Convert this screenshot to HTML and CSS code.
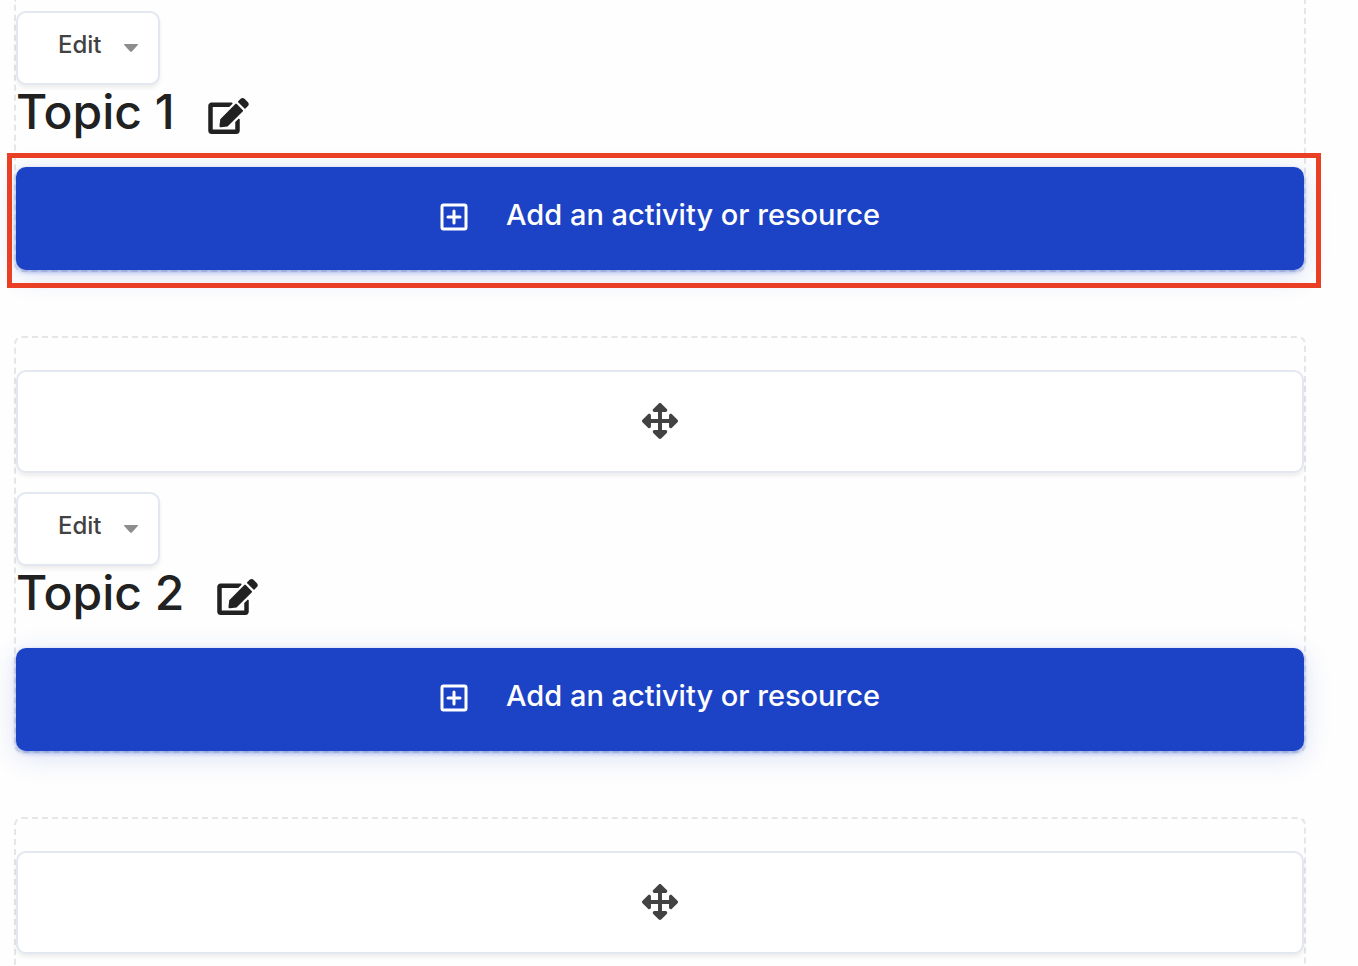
FILE: index.html
```
<!DOCTYPE html>
<html lang="en">

<head>
    <meta charset="UTF-8">
    <meta name="viewport" content="width=device-width,initial-scale=1">
    <link rel="stylesheet" href="styles.css">
    <title>Course topics</title>
</head>

<body>
    <!-- shared icons -->
    <svg class="sprite" aria-hidden="true">
        <symbol id="icon-edit" viewBox="0 0 576 512">
            <path d="M402.6 83.2l90.2 90.2c3.8 3.8 3.8 10 0 13.8L274.4 405.6l-92.8 10.3c-12.4 1.4-22.9-9.1-21.5-21.5l10.3-92.8L388.8 83.2c3.8-3.8 10-3.8 13.8 0zm162-22.9l-48.8-48.8c-15.2-15.2-39.9-15.2-55.2 0l-35.4 35.4c-3.8 3.8-3.8 10 0 13.8l90.2 90.2c3.8 3.8 10 3.8 13.8 0l35.4-35.4c15.2-15.3 15.2-40 0-55.2zM384 346.2V448H64V128h229.8c3.2 0 6.2-1.3 8.5-3.5l40-40c7.6-7.6 2.2-20.5-8.5-20.5H48C21.5 64 0 85.5 0 112v352c0 26.5 21.5 48 48 48h352c26.5 0 48-21.5 48-48V306.2c0-10.7-12.9-16-20.5-8.5l-40 40c-2.2 2.3-3.5 5.3-3.5 8.5z"/>
        </symbol>
        <symbol id="icon-move" viewBox="0 0 512 512">
            <path d="M352.201 425.775l-79.196 79.196c-9.373 9.373-24.568 9.373-33.941 0l-79.196-79.196c-15.119-15.119-4.411-40.971 16.971-40.97h51.162L228 284H127.196v51.162c0 21.382-25.851 32.09-40.971 16.971L7.029 272.937c-9.373-9.373-9.373-24.569 0-33.941L86.225 159.8c15.119-15.119 40.971-4.411 40.971 16.971V228H228V127.196h-51.23c-21.382 0-32.09-25.851-16.971-40.971l79.196-79.196c9.373-9.373 24.568-9.373 33.941 0l79.196 79.196c15.119 15.119 4.411 40.971-16.971 40.971h-51.162V228h100.804v-51.162c0-21.382 25.851-32.09 40.97-16.971l79.196 79.196c9.373 9.373 9.373 24.569 0 33.941L425.773 352.2c-15.119 15.119-40.971 4.411-40.97-16.971V284H284v100.804h51.23c21.382 0 32.09 25.851 16.971 40.971z"/>
        </symbol>
        <symbol id="icon-add" viewBox="0 0 28 28">
            <rect x="2" y="2" width="24" height="24" rx="1.5" fill="none" stroke="currentColor" stroke-width="3"/>
            <path d="M14 8v12M8 14h12" fill="none" stroke="currentColor" stroke-width="3" stroke-linecap="round"/>
        </symbol>
        <symbol id="icon-caret" viewBox="0 0 14 8">
            <path d="M0.6 0h12.8c0.6 0 0.8 0.7 0.4 1.1L7.9 7.4c-0.5 0.5-1.3 0.5-1.8 0L0.2 1.1C-0.2 0.7 0 0 0.6 0z"/>
        </symbol>
    </svg>

    <main class="topics">
        <section class="topic topic-first">
            <button type="button" class="button-edit">
                Edit
                <svg class="caret"><use href="#icon-caret"/></svg>
            </button>
            <h3 class="topic-title">
                Topic 1
                <a href="#" aria-label="Edit topic name"><svg class="icon-edit"><use href="#icon-edit"/></svg></a>
            </h3>
            <div class="highlight">
                <button type="button" class="button-add">
                    <svg class="icon-add"><use href="#icon-add"/></svg>
                    Add an activity or resource
                </button>
            </div>
        </section>

        <section class="topic">
            <button type="button" class="button-move" aria-label="Move topic">
                <svg class="icon-move"><use href="#icon-move"/></svg>
            </button>
            <button type="button" class="button-edit">
                Edit
                <svg class="caret"><use href="#icon-caret"/></svg>
            </button>
            <h3 class="topic-title">
                Topic 2
                <a href="#" aria-label="Edit topic name"><svg class="icon-edit"><use href="#icon-edit"/></svg></a>
            </h3>
            <button type="button" class="button-add">
                <svg class="icon-add"><use href="#icon-add"/></svg>
                Add an activity or resource
            </button>
        </section>

        <section class="topic topic-last">
            <button type="button" class="button-move" aria-label="Move topic">
                <svg class="icon-move"><use href="#icon-move"/></svg>
            </button>
        </section>
    </main>
</body>

</html>
```
FILE: styles.css
```
*,
*::before,
*::after {
    box-sizing: border-box;
    padding: 0;
    margin: 0;
}

body {
    background: #fefefe;
    color: #212121;
    font-family: Inter, "Liberation Sans", sans-serif;
}

svg {
    display: block;
    flex: none;
    fill: currentColor;
}

button {
    font: inherit;
    cursor: pointer;
}

.sprite {
    display: none;
}

.topics {
    display: flex;
    flex-direction: column;
    gap: 64px;
    min-height: 100vh;
    padding: 0 52px 0 14px;
}

.topic {
    display: flex;
    flex-direction: column;
    align-items: stretch;
    padding-top: 32px;
    border: 2px dashed #e6e6e6;
    border-radius: 8px;
}

.topic-first {
    padding-top: 11px;
    border-top: none;
    border-top-left-radius: 0;
    border-top-right-radius: 0;
}

.topic-last {
    flex-grow: 1;
    border-bottom: none;
    border-bottom-left-radius: 0;
    border-bottom-right-radius: 0;
}

.button-move,
.button-edit {
    display: flex;
    align-items: center;
    background: #fff;
    color: #424242;
    border: 2px solid #e3e7ef;
    border-radius: 10px;
    box-shadow: 0 3px 4px 0 rgba(0, 0, 0, 0.07);
}

.button-move {
    justify-content: center;
    height: 103px;
    padding-bottom: 2px;
}

.button-move + .button-edit {
    margin-top: 19px;
}

.button-edit {
    align-self: flex-start;
    gap: 22px;
    height: 74px;
    padding: 0 20px 8px 40px;
    font-size: 24px;
    font-weight: 500;
}

.caret {
    width: 14px;
    height: 8px;
    margin-top: 8px;
    color: #8d8d8d;
}

.icon-move {
    width: 36px;
    height: 36px;
}

.topic-title {
    display: flex;
    align-items: center;
    gap: 33px;
    height: 82px;
    padding-bottom: 30px;
    font-size: 48px;
    font-weight: 500;
}

.topic-title a {
    margin-top: 10px;
    color: inherit;
}

.icon-edit {
    width: 41px;
    height: 36px;
}

.button-add {
    display: flex;
    justify-content: center;
    align-items: center;
    gap: 38px;
    width: 100%;
    height: 103px;
    padding-bottom: 8px;
    background: #1c43c5;
    color: #fff;
    border: none;
    border-radius: 10px;
    font-size: 29px;
    font-weight: 500;
    box-shadow: 0 2px 4px 0 rgba(28, 67, 197, 0.4), 0 6px 28px 0 rgba(28, 67, 197, 0.16);
}

.icon-add {
    width: 28px;
    height: 28px;
    margin-top: 4px;
}

/* red frame over the button */
.highlight {
    position: relative;
}

.highlight::after {
    content: "";
    position: absolute;
    top: -14px;
    right: -17px;
    bottom: -18px;
    left: -9px;
    border: 5px solid #e94025;
    pointer-events: none;
}
```
